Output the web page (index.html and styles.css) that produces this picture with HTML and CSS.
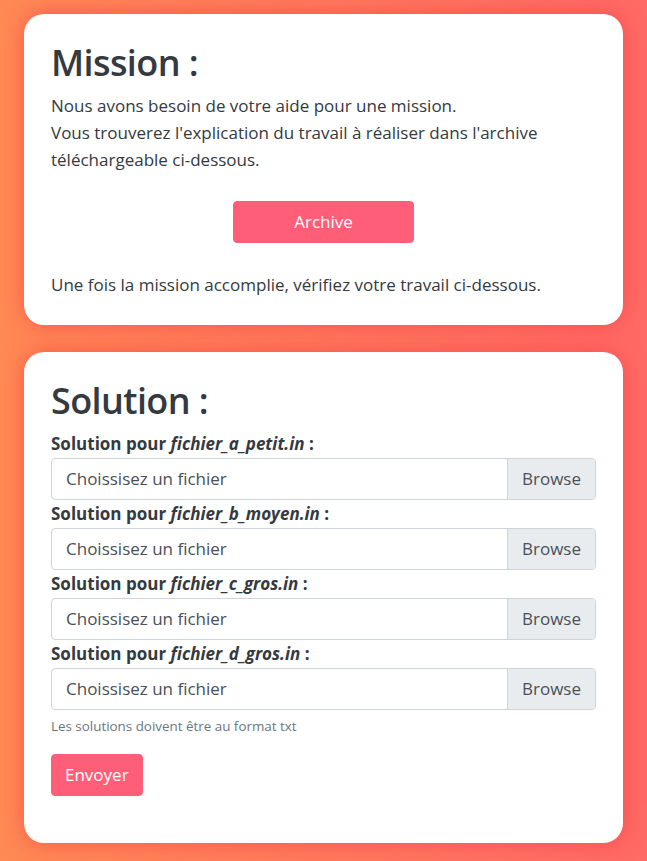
FILE: index.html
```html
<!DOCTYPE html>
<html lang="fr">
<head>
<meta charset="utf-8">
<title>Mission</title>
<link rel="stylesheet" href="styles.css">
</head>
<body>
<main class="page">
  <section class="card">
    <h1 class="title">Mission :</h1>
    <p class="text">Nous avons besoin de votre aide pour une mission.<br>Vous trouverez l'explication du travail à réaliser dans l'archive téléchargeable ci-dessous.</p>
    <div class="center">
      <a class="btn btn-wide" href="#">Archive</a>
    </div>
    <p class="text">Une fois la mission accomplie, vérifiez votre travail ci-dessous.</p>
  </section>

  <section class="card">
    <h1 class="title">Solution :</h1>
    <form class="form">
      <div class="group">
        <label class="label">Solution pour <em>fichier_a_petit.in</em> :</label>
        <div class="file"><span class="file-text">Choissisez un fichier</span><span class="file-btn">Browse</span></div>
      </div>
      <div class="group">
        <label class="label">Solution pour <em>fichier_b_moyen.in</em> :</label>
        <div class="file"><span class="file-text">Choissisez un fichier</span><span class="file-btn">Browse</span></div>
      </div>
      <div class="group">
        <label class="label">Solution pour <em>fichier_c_gros.in</em> :</label>
        <div class="file"><span class="file-text">Choissisez un fichier</span><span class="file-btn">Browse</span></div>
      </div>
      <div class="group">
        <label class="label">Solution pour <em>fichier_d_gros.in</em> :</label>
        <div class="file"><span class="file-text">Choissisez un fichier</span><span class="file-btn">Browse</span></div>
      </div>
      <small class="hint">Les solutions doivent être au format txt</small>
      <button type="button" class="btn">Envoyer</button>
    </form>
  </section>
</main>
</body>
</html>
```

FILE: styles.css
```css
html, body {
  margin: 0;
  padding: 0;
}
body {
  min-height: 861px;
  background: linear-gradient(to right, #ff8a55, #ff6a66);
  font-family: "Open Sans", "Noto Sans", sans-serif;
  font-size: 17px;
  color: #343a40;
}
.page {
  padding: 14px 24px 20px;
  display: flex;
  flex-direction: column;
  gap: 27px;
}
.card {
  background: #fff;
  border-radius: 20px;
  padding: 24px 27px 27px;
  box-shadow: 0 0 22px rgba(240, 50, 60, 0.55);
}
.title {
  margin: 0 0 5px;
  font-size: 36px;
  font-weight: 600;
  letter-spacing: -0.6px;
  line-height: 49px;
  color: #343a40;
}
.text {
  margin: 0;
  line-height: 27px;
}
.center {
  display: flex;
  justify-content: center;
  margin: 28px 0;
}
.btn {
  display: inline-block;
  box-sizing: border-box;
  height: 42px;
  line-height: 40px;
  padding: 0 13px;
  background: #ff5e78;
  color: #fff;
  border: 1px solid #ff5e78;
  border-radius: 4px;
  font-family: inherit;
  font-size: 17px;
  text-decoration: none;
  text-align: center;
}
.btn-wide {
  width: 181px;
}
.form {
  display: flex;
  flex-direction: column;
  align-items: flex-start;
  padding-bottom: 20px;
}
.group {
  align-self: stretch;
}
.label {
  display: block;
  font-weight: 700;
  line-height: 28px;
}
.label em {
  font-style: italic;
}
.file {
  display: flex;
  box-sizing: border-box;
  height: 42px;
  border: 1px solid #ced4da;
  border-radius: 4px;
  overflow: hidden;
}
.file-text {
  flex: 1;
  padding: 0 14px;
  line-height: 40px;
  color: #495057;
}
.file-btn {
  padding: 0 14px;
  line-height: 40px;
  background: #e9ecef;
  border-left: 1px solid #ced4da;
  color: #495057;
}
.hint {
  margin: 5px 0 17px;
  font-size: 13.4px;
  line-height: 22px;
  color: #6c757d;
}
```
